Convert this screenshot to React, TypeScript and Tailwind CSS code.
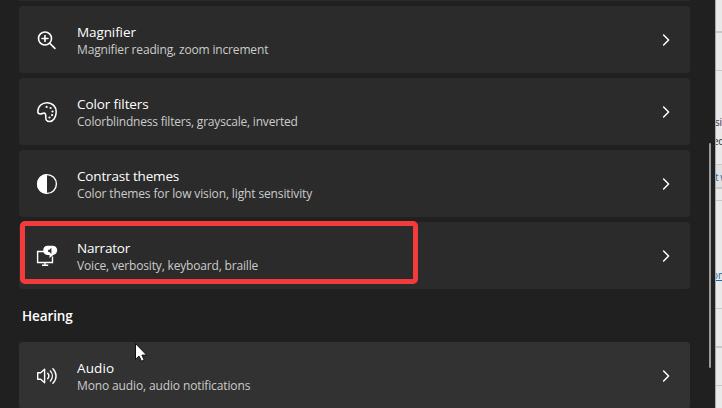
import type { ReactNode } from "react";

function Magnifier() {
  return (
    <svg className="translate-y-px" width="22" height="22" viewBox="0 0 22 22" fill="none" stroke="#fff" strokeWidth="1.6" strokeLinecap="round">
      <circle cx="9" cy="8.500" r="6.500" />
      <path d="M9 5.500v6M6 8.500h6M13.700 13.200l5.200 5.200" />
    </svg>
  );
}

function Palette() {
  return (
    <svg width="22" height="22" viewBox="0 0 22 22" fill="none" stroke="#fff" strokeWidth="1.5" strokeLinejoin="round">
      <path d="M1.8 10.8C1.8 5 6.3 1.6 11.3 1.7c5.2.1 8.9 4 8.9 9.1 0 5.5-3 9.7-6.7 9.600-2.300-.1-3.700-1.400-3.700-3.500 0-2 .4-4.400-1.500-4.900-1.600-.4-2.200 1.200-3.800 1.100C2.700 13 1.800 12.200 1.800 10.800Z" />
      <g fill="#fff" stroke="none">
        <circle cx="10.600" cy="5.900" r="1.100" />
        <circle cx="14.600" cy="7" r="1.100" />
        <circle cx="16.500" cy="10.500" r="1.100" />
        <circle cx="16.100" cy="14.100" r="1.100" />
        <circle cx="13.500" cy="16.500" r="1.100" />
      </g>
    </svg>
  );
}

function Contrast() {
  return (
    <svg width="22" height="22" viewBox="0 0 22 22">
      <circle cx="11" cy="11" r="9.400" fill="none" stroke="#fff" strokeWidth="1.400" />
      <path d="M11 1a10 10 0 0 0 0 20Z" fill="#fff" />
    </svg>
  );
}

function Narrator() {
  return (
    <svg width="22" height="22" viewBox="0 0 22 22" fill="none">
      <path d="M8 6.500H1.600V17.500H16.500V11.500M9 18v2M6 20.300h6.200" stroke="#fff" strokeWidth="1.400" />
      <path d="M11.600.8h5c2.700 0 4.600 2 4.600 4.400 0 2.300-1.400 4-3.600 4.600L13.500 13V10h-1.600c-2.800 0-4.700-2-4.700-4.600S8.900.8 11.600.8Z" fill="#fff" />
      <path d="M15.400 2.700v6.200l-1.900-2h-1.300V4.800h1.300Z" fill="#2b2b2b" />
    </svg>
  );
}

function Speaker() {
  return (
    <svg width="22" height="22" viewBox="0 0 22 22" fill="none" stroke="#fff" strokeWidth="1.400" strokeLinecap="round" strokeLinejoin="round">
      <path d="M1.700 7.700h3L8.600 4.200v13.600l-3.900-3.500h-3ZM11.700 8.300c1.400 1.600 1.400 3.800 0 5.400M14.300 5.900c2.700 3 2.700 7.200 0 10.200M16.900 3.700c4.200 4.200 4.200 10.400 0 14.600" />
    </svg>
  );
}

function Chevron() {
  return (
    <svg className="mr-[17px]" width="14" height="14" viewBox="0 0 14 14" fill="none" stroke="#fff" strokeWidth="1.5" strokeLinecap="round" strokeLinejoin="round">
      <path d="M4.600 2l5 5-5 5" />
    </svg>
  );
}

type RowProps = { icon: ReactNode; title: string; detail: string; titleClass: string; detailClass: string; hover?: boolean };

function Row({ icon, title, detail, titleClass, detailClass, hover }: RowProps) {
  return (
    <div className={`flex h-[67px] shrink-0 items-center rounded-[4px] ${hover ? "bg-[#323232]" : "bg-[#2b2b2b]"}`}>
      <div className="ml-[17px] w-[41px] pt-px">{icon}</div>
      <div className="flex-1 whitespace-nowrap pt-[2px]">
        <div className={`text-[13.5px] leading-[18px] text-white ${titleClass}`}>{title}</div>
        <div className={`text-[12px] leading-[17px] text-[#cbcbcb] ${detailClass}`}>{detail}</div>
      </div>
      <Chevron />
    </div>
  );
}

export default function App() {
  return (
    <div className="relative flex h-[408px] w-[722px] overflow-hidden bg-[#202020] font-['Open_Sans','Noto_Sans',sans-serif]">
      <main className="flex w-[690px] flex-col pl-[19px]">
        <div className="mb-[5px] h-px shrink-0 bg-[#2b2b2b]" />
        <div className="flex flex-col gap-[5px]">
          <Row icon={<Magnifier />} title="Magnifier" detail="Magnifier reading, zoom increment" titleClass="tracking-[-0.1px]" detailClass="tracking-[-0.16px]" />
          <Row icon={<Palette />} title="Color filters" detail="Colorblindness filters, grayscale, inverted" titleClass="tracking-[-0.1px]" detailClass="tracking-[-0.2px]" />
          <Row icon={<Contrast />} title="Contrast themes" detail="Color themes for low vision, light sensitivity" titleClass="tracking-[-0.17px]" detailClass="tracking-[-0.13px]" />
          <Row icon={<Narrator />} title="Narrator" detail="Voice, verbosity, keyboard, braille" titleClass="tracking-[-0.2px]" detailClass="tracking-[-0.17px]" />
        </div>
        <h2 className="flex h-[53px] shrink-0 items-center pl-[3px] pt-px text-[13.5px] font-semibold tracking-[-0.1px] text-white">Hearing</h2>
        <Row hover icon={<Speaker />} title="Audio" detail="Mono audio, audio notifications" titleClass="tracking-[0.1px]" detailClass="tracking-[-0.13px]" />
      </main>
      <div className="w-[25px] pl-[19px] pt-[143px]">
        <div className="h-[225px] w-[2px] rounded-full bg-[#9a9a9a]" />
      </div>
      <aside className="flex w-[7px] flex-col overflow-hidden border-l border-[#aaa] bg-[#e9e9e9] text-[10px] leading-[14px] text-[#333]">
        <div className="h-[33px] shrink-0 border-b-2 border-[#c8c8c8]" />
        <div className="h-[38px] shrink-0 border-b border-[#c8c8c8]" />
        <div className="h-[94px] shrink-0 border-b border-[#c8c8c8] pt-[44px]">
          <div className="-ml-px h-[19px] tracking-[-0.3px] text-[#4a2848]">si</div>
          <div className="-ml-[3px] tracking-[-0.3px]">ed</div>
        </div>
        <div className="h-[24px] shrink-0 whitespace-nowrap border-b-2 border-[#c8c8c8] bg-[#e0e0e0] pt-[5px] text-[#2869a0]"><span className="-ml-[1px] tracking-[-0.4px]">t w</span></div>
        <div className="h-[12px] shrink-0 border-b border-[#c8c8c8]" />
        <div className="h-[108px] shrink-0 border-b border-[#c8c8c8] pt-[67px] text-[#1769aa]"><span className="-ml-[4px] underline">on</span></div>
        <div className="h-[39px] shrink-0 border-b-2 border-[#c8c8c8]" />
        <div className="h-[38px] shrink-0 border-b border-[#c8c8c8]" />
      </aside>
      <div className="absolute left-[20px] top-[221px] h-[63px] w-[398px] rounded-[5px] border-[5px] border-[#f43b3b]" />
      <svg className="absolute left-[134px] top-[342px]" width="16" height="22" viewBox="0 0 16 22">
        <path d="M1.500 1.500V17.300l3.500-3.200 2.600 5.200 2.600-1.200-2.300-5h4.700Z" fill="#fff" stroke="#111" strokeWidth="1" />
      </svg>
    </div>
  );
}
